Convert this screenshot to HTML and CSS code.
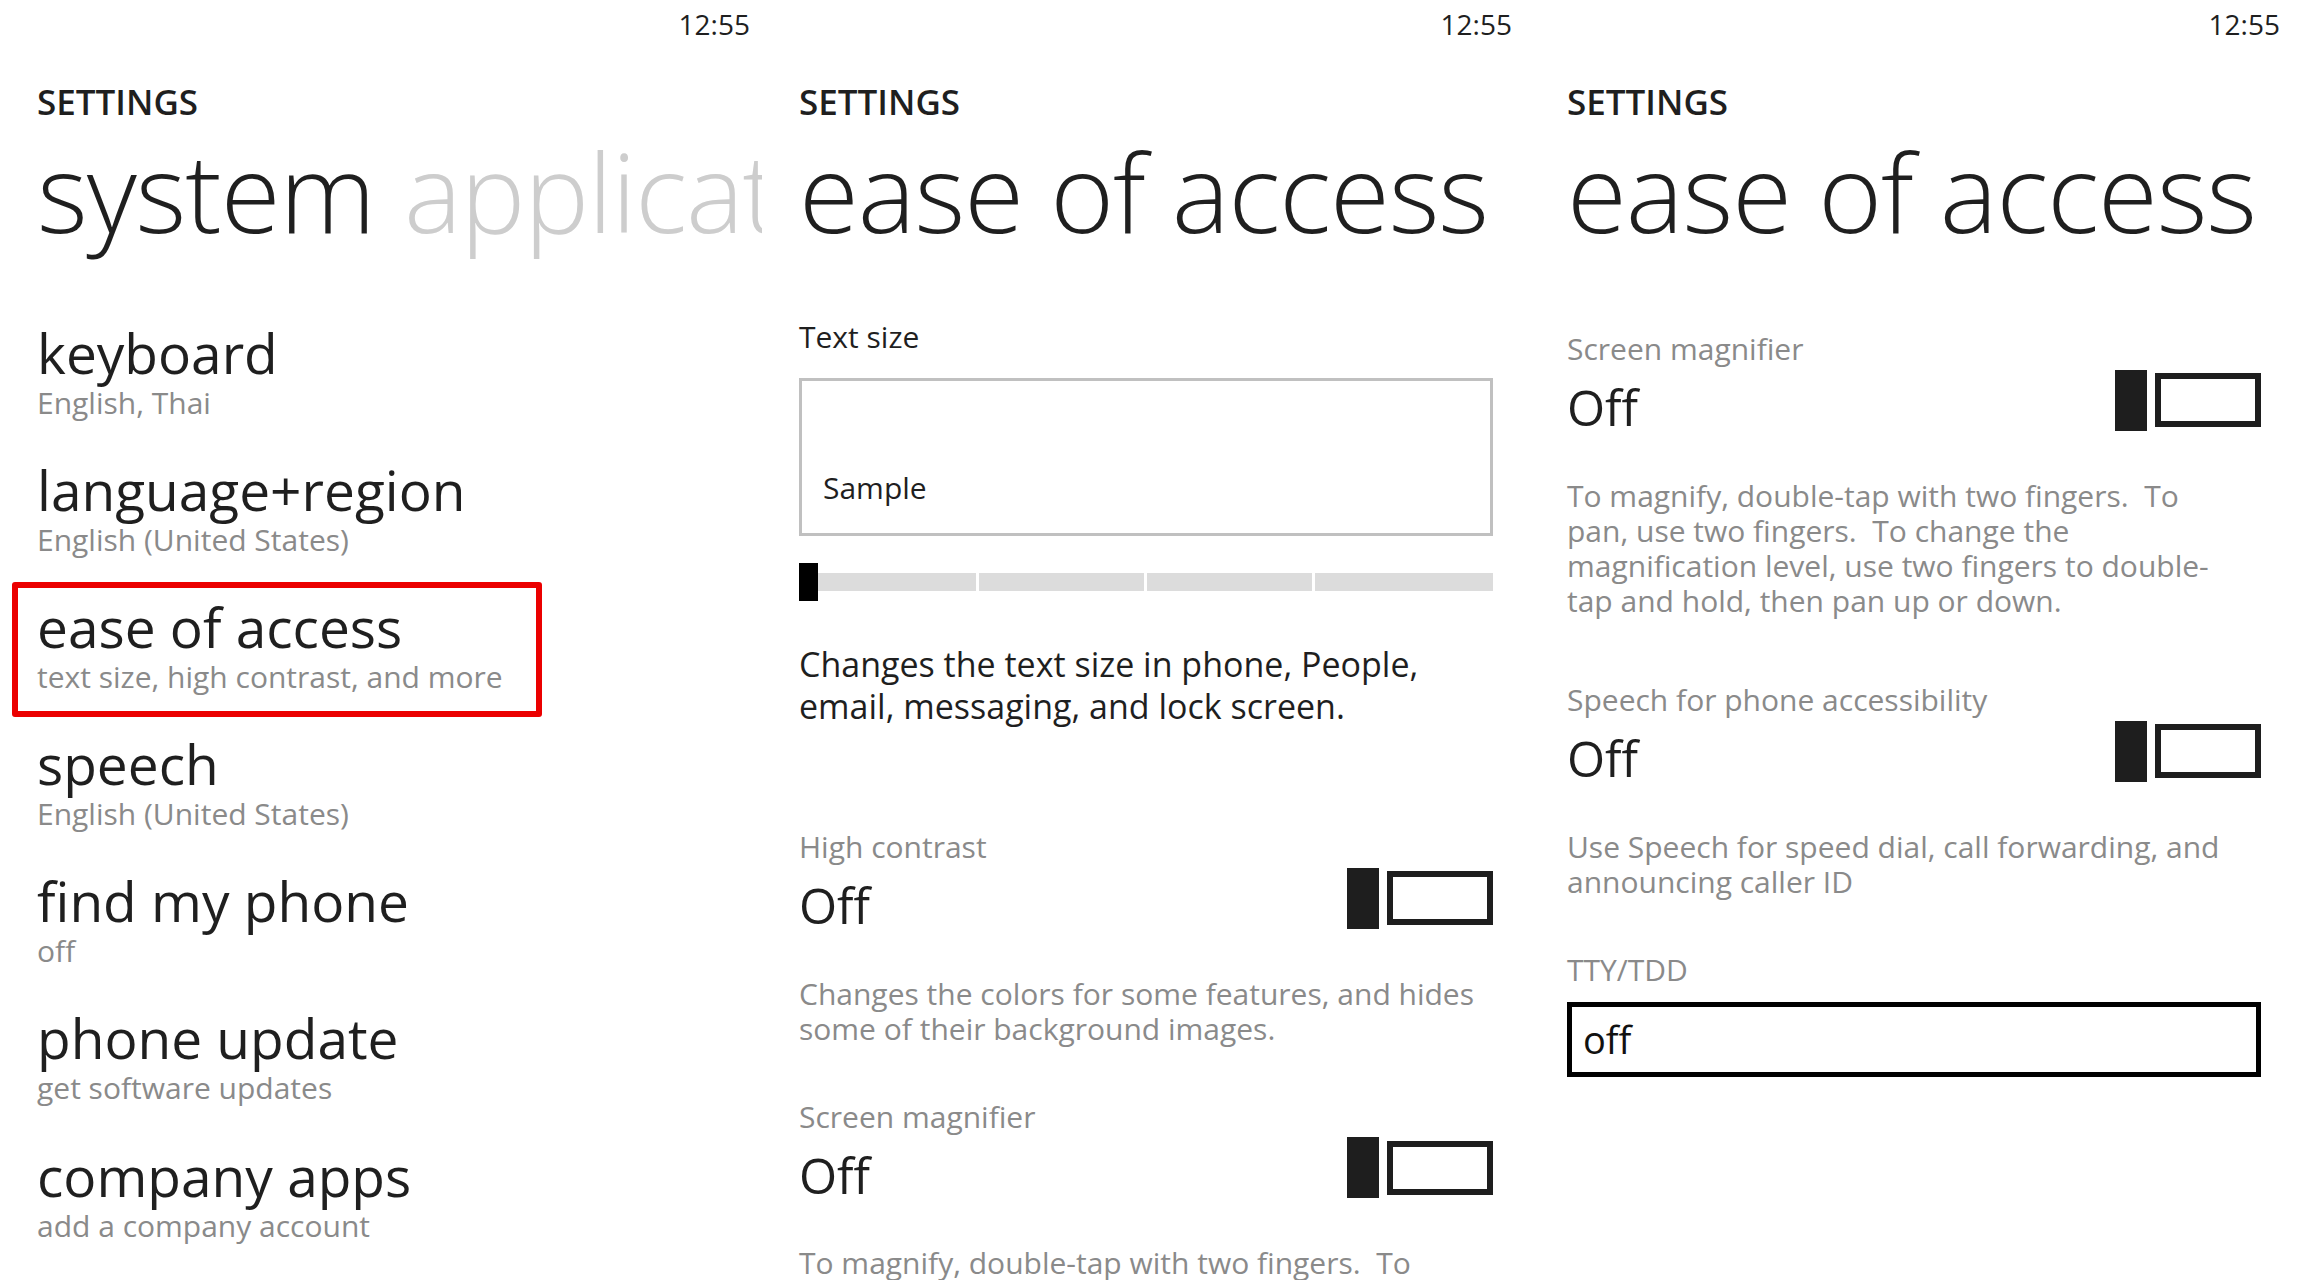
FILE: index.html
```html
<!DOCTYPE html>
<html>
<head>
<meta charset="utf-8">
<title>Settings - ease of access</title>
<link rel="stylesheet" href="styles.css">
</head>
<body>
<div class="screens">

<!-- settings pivot -->
<section class="screen first">
  <div class="status">12:55</div>
  <div class="app-title">SETTINGS</div>
  <div class="page-title pivot"><span>system</span> <span class="dim">applications</span></div>
  <ul class="menu">
    <li class="menu-item"><div class="name">keyboard</div><div class="sub">English, Thai</div></li>
    <li class="menu-item"><div class="name">language+region</div><div class="sub">English (United States)</div></li>
    <li class="menu-item marked"><div class="name">ease of access</div><div class="sub">text size, high contrast, and more</div></li>
    <li class="menu-item"><div class="name">speech</div><div class="sub">English (United States)</div></li>
    <li class="menu-item"><div class="name">find my phone</div><div class="sub">off</div></li>
    <li class="menu-item"><div class="name">phone update</div><div class="sub">get software updates</div></li>
    <li class="menu-item"><div class="name">company apps</div><div class="sub">add a company account</div></li>
  </ul>
</section>

<!-- ease of access, top -->
<section class="screen">
  <div class="status">12:55</div>
  <div class="app-title">SETTINGS</div>
  <div class="page-title">ease of access</div>

  <div class="label dark first-label">Text size</div>
  <div class="sample"><span>Sample</span></div>
  <div class="slider">
    <div class="track"><span></span><span></span><span></span><span></span></div>
    <div class="thumb"></div>
  </div>
  <p class="desc dark">Changes the text size in phone, People,<br>email, messaging, and lock screen.</p>

  <div class="label after-dark">High contrast</div>
  <div class="toggle-row">
    <span class="value">Off</span>
    <span class="toggle"><i class="knob"></i><i class="frame"></i></span>
  </div>
  <p class="desc">Changes the colors for some features, and hides<br>some of their background images.</p>

  <div class="label">Screen magnifier</div>
  <div class="toggle-row">
    <span class="value">Off</span>
    <span class="toggle"><i class="knob"></i><i class="frame"></i></span>
  </div>
  <p class="desc">To magnify, double-tap with two fingers.&nbsp; To<br>pan, use two fingers.&nbsp; To change the</p>
</section>

<!-- ease of access, scrolled -->
<section class="screen">
  <div class="status">12:55</div>
  <div class="app-title">SETTINGS</div>
  <div class="page-title">ease of access</div>

  <div class="label scrolled-label">Screen magnifier</div>
  <div class="toggle-row">
    <span class="value">Off</span>
    <span class="toggle"><i class="knob"></i><i class="frame"></i></span>
  </div>
  <p class="desc">To magnify, double-tap with two fingers.&nbsp; To<br>pan, use two fingers.&nbsp; To change the<br>magnification level, use two fingers to double-<br>tap and hold, then pan up or down.</p>

  <div class="label after-long">Speech for phone accessibility</div>
  <div class="toggle-row">
    <span class="value">Off</span>
    <span class="toggle"><i class="knob"></i><i class="frame"></i></span>
  </div>
  <p class="desc">Use Speech for speed dial, call forwarding, and<br>announcing caller ID</p>

  <div class="label">TTY/TDD</div>
  <div class="picker">off</div>
</section>

</div>
</body>
</html>
```

FILE: styles.css
```css
html, body {
    margin: 0;
    background: #fff;
}
body {
    font-family: "Open Sans", "Noto Sans", sans-serif;
    color: #1f1f1f;
}

.screens {
    display: flex;
    height: 1280px;
    overflow: hidden;
}

.screen {
    width: 768px;
    flex: none;
    box-sizing: border-box;
    padding: 0 37px;
    overflow: hidden;
}
.screen.first {
    width: 762px;
    padding-right: 31px;
}

/* top of every screen */
.status {
    height: 48px;
    line-height: 48px;
    margin-right: -19px;
    text-align: right;
    font-size: 28px;
}
.app-title {
    margin-top: 34px;
    line-height: 40px;
    font-size: 35px;
    font-weight: 600;
}
.page-title {
    margin-top: 4px;
    line-height: 130px;
    font-size: 109px;
    font-weight: 300;
    white-space: nowrap;
    letter-spacing: -0.01em;
}
.pivot .dim {
    color: #cdcdcd;
    margin-left: 2px;
}

/* pivot list */
.menu {
    list-style: none;
    margin: 67px 0 0;
    padding: 0;
}
.menu-item {
    position: relative;
    margin-bottom: 37.1px;
}
.menu-item .name {
    font-size: 55px;
    line-height: 60px;
    white-space: nowrap;
}
.menu-item .sub {
    font-size: 30px;
    line-height: 40px;
    color: #8a8a8a;
    white-space: nowrap;
}
.menu-item.marked::after {
    content: "";
    position: absolute;
    left: -25px;
    top: -15px;
    width: 530px;
    height: 135px;
    box-sizing: border-box;
    border: 6px solid #eb0000;
    border-radius: 3px;
}

/* settings blocks */
.label {
    margin-top: 50.5px;
    font-size: 30px;
    line-height: 40px;
    color: #8a8a8a;
    white-space: nowrap;
}
.label.dark { color: #1f1f1f; }
.label.first-label { margin-top: 61px; }
.label.after-dark { margin-top: 100px; }
.label.scrolled-label { margin-top: 73px; }
.label.after-long { margin-top: 61.5px; }

.sample {
    margin-top: 21px;
    height: 158px;
    box-sizing: border-box;
    border: 3px solid #c0c0c0;
    padding: 0 21px 25px;
    display: flex;
    align-items: flex-end;
    font-size: 30px;
    line-height: 40px;
}

.slider {
    position: relative;
    margin-top: 27px;
    height: 38px;
    display: flex;
    align-items: center;
}
.track {
    flex: 1;
    display: flex;
    gap: 3px;
    height: 18px;
}
.track span {
    flex: 165;
    background: #dcdcdc;
}
.track span:first-child { flex: 176; }
.track span:last-child { flex: 177; }
.thumb {
    position: absolute;
    left: 0;
    top: 0;
    width: 19px;
    height: 38px;
    background: #000;
}

.desc {
    margin: 46.5px 0 0;
    font-size: 30px;
    line-height: 35.3px;
    color: #8a8a8a;
    white-space: nowrap;
}
.desc.dark {
    margin-top: 42px;
    font-size: 34px;
    line-height: 42px;
    color: #1f1f1f;
}

.toggle-row {
    height: 62px;
    display: flex;
    justify-content: space-between;
    align-items: center;
}
.toggle-row .value {
    margin-top: 14px;
    font-size: 49px;
    line-height: 62px;
}
.toggle {
    display: flex;
    align-items: center;
    gap: 8px;
}
.toggle .knob {
    width: 32px;
    height: 61px;
    background: #1e1e1e;
}
.toggle .frame {
    width: 106px;
    height: 54px;
    box-sizing: border-box;
    border: 6px solid #1e1e1e;
}

.picker {
    margin-top: 12px;
    height: 75px;
    box-sizing: border-box;
    border: 5px solid #000;
    padding-left: 11px;
    font-size: 38px;
    line-height: 65px;
    color: #111;
}
```
